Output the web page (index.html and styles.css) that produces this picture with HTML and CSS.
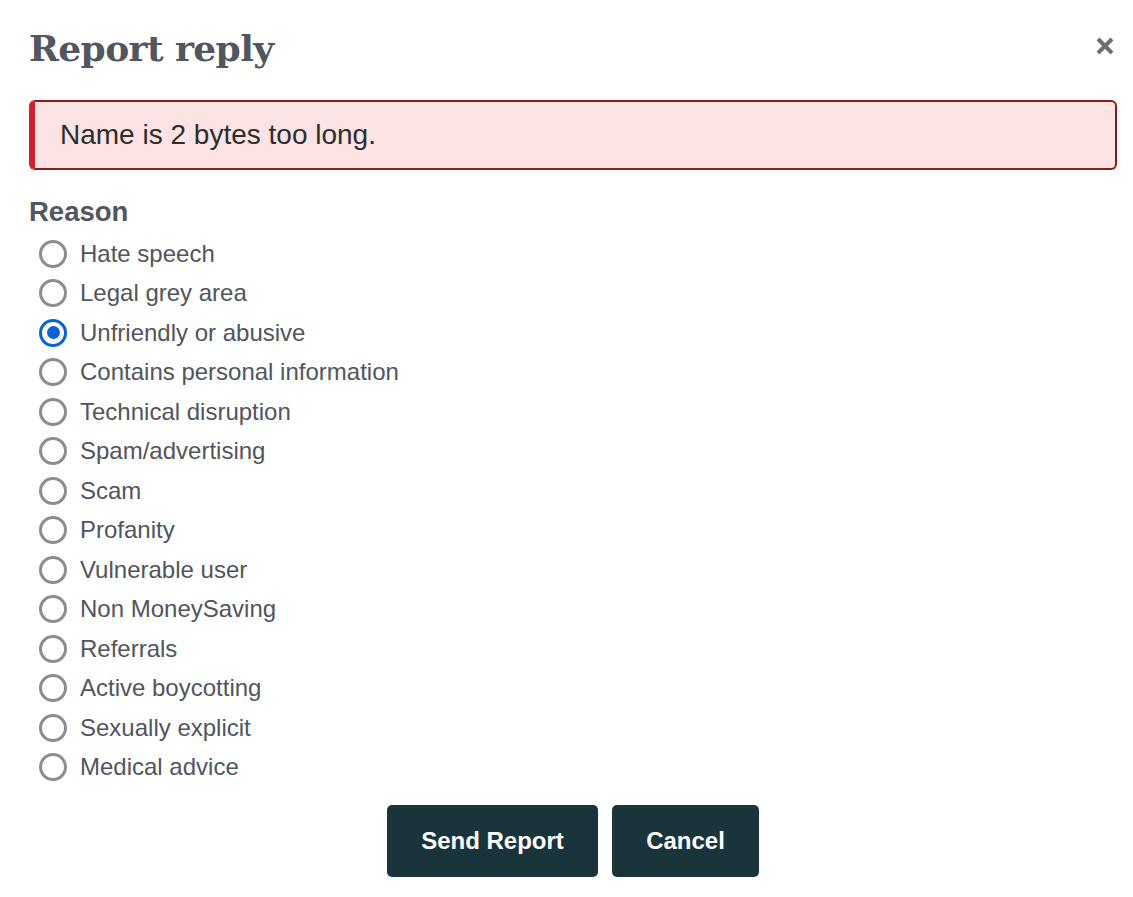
FILE: index.html
```html
<!DOCTYPE html>
<html>
<head>
<meta charset="utf-8">
<link rel="stylesheet" href="styles.css">
</head>
<body>
<div class="dialog">
  <div class="header">
    <h1 class="title">Report reply</h1>
    <button class="close" aria-label="Close">
      <svg width="20" height="20" viewBox="0 0 20 20"><path d="M3 3 L17 17 M17 3 L3 17" stroke="#6b6e73" stroke-width="4" stroke-linecap="butt"/></svg>
    </button>
  </div>
  <div class="alert">Name is 2 bytes too long.</div>
  <div class="reason-label">Reason</div>
  <div class="options">
    <label class="opt"><span class="radio"></span>Hate speech</label>
    <label class="opt"><span class="radio"></span>Legal grey area</label>
    <label class="opt"><span class="radio checked"></span>Unfriendly or abusive</label>
    <label class="opt"><span class="radio"></span>Contains personal information</label>
    <label class="opt"><span class="radio"></span>Technical disruption</label>
    <label class="opt"><span class="radio"></span>Spam/advertising</label>
    <label class="opt"><span class="radio"></span>Scam</label>
    <label class="opt"><span class="radio"></span>Profanity</label>
    <label class="opt"><span class="radio"></span>Vulnerable user</label>
    <label class="opt"><span class="radio"></span>Non MoneySaving</label>
    <label class="opt"><span class="radio"></span>Referrals</label>
    <label class="opt"><span class="radio"></span>Active boycotting</label>
    <label class="opt"><span class="radio"></span>Sexually explicit</label>
    <label class="opt"><span class="radio"></span>Medical advice</label>
  </div>
  <div class="actions">
    <button class="btn send">Send Report</button>
    <button class="btn cancel">Cancel</button>
  </div>
</div>
</body>
</html>
```
FILE: styles.css
```css
* { box-sizing: border-box; }
html, body { margin: 0; padding: 0; background: #fff; }
body { font-family: "Liberation Sans", Arial, sans-serif; }
.dialog { padding: 22px 16px 0 29px; }
.header { display: flex; justify-content: space-between; align-items: flex-start; height: 78px; }
.title {
  margin: 0; font-family: "DejaVu Serif", serif; font-weight: bold;
  font-size: 36px; color: #52565e; line-height: 52px; letter-spacing: -0.6px;
}
.close { border: 0; background: none; padding: 0; margin: 14px 2px 0 0; width: 20px; height: 20px; }
.alert {
  height: 70px; background: #fce4e4; border: 2px solid #8e1b1b; border-left: 6px solid #d0212b;
  border-radius: 6px; padding-left: 25px; display: flex; align-items: center;
  font-size: 28px; color: #2d2d2d;
}
.reason-label { margin-top: 27px; font-weight: bold; font-size: 27.5px; color: #52565e; line-height: 30px; }
.options { display: flex; flex-direction: column; margin-top: 7px; }
.opt { display: flex; align-items: center; height: 39.5px; font-size: 24px; color: #51555c; padding-left: 10px; }
.radio {
  width: 28px; height: 28px; border: 3.5px solid #8b8d92; border-radius: 50%;
  margin-right: 13px; flex: none; display: flex; align-items: center; justify-content: center;
}
.radio.checked { border-color: #0a62d6; border-width: 3.5px; }
.radio.checked::after { content: ""; width: 13px; height: 13px; border-radius: 50%; background: #0a62d6; }
.actions { display: flex; justify-content: center; gap: 14px; margin-top: 18px; }
.btn {
  height: 72px; border: 0; border-radius: 5px; background: #19343b; color: #fff;
  font-family: "Liberation Sans", Arial, sans-serif; font-weight: bold; font-size: 24px;
}
.send { width: 211px; }
.cancel { width: 147px; }
```
